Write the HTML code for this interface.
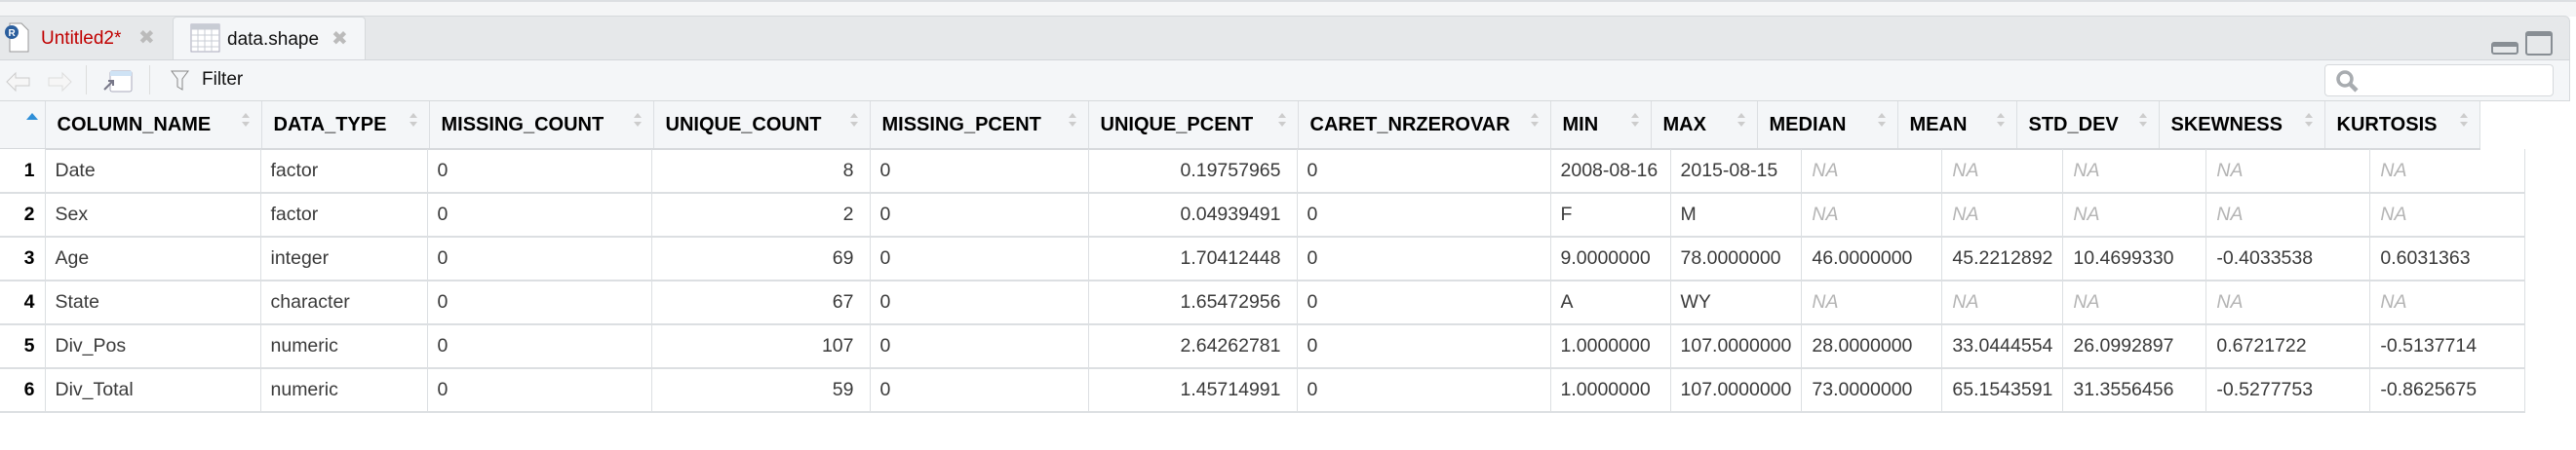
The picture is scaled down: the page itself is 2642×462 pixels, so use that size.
<!DOCTYPE html>
<html><head><meta charset="utf-8"><style>
*{box-sizing:border-box;margin:0;padding:0}
body{width:2642px;height:462px;background:#fff;font-family:"Liberation Sans",sans-serif;position:relative;overflow:hidden}
.top{position:absolute;left:0;top:0;width:2642px;height:17px;background:#f4f5f6;border-top:2px solid #dcdfe2}
.tabbar{position:absolute;left:0;top:16px;width:2636px;height:45px;background:#e6e8ea;border-top:1px solid #d6d9dc;border-right:1px solid #d6d9dc;border-radius:0 6px 0 0}
.tab{position:absolute;top:0;height:45px;font-size:19px;line-height:45px}
.tb{position:absolute;left:0;top:61px;width:2636px;height:43px;background:#f4f6f8;border-top:1px solid #d3d6da;border-bottom:1px solid #d6d9dc;border-right:1px solid #d6d9dc}
table{position:absolute;border-collapse:collapse;table-layout:fixed}
.h{left:0;top:104px}
.h td{height:49px;background:#f4f6f8;border-right:1px solid #dcdfe2;border-bottom:2px solid #d6d9dc;font-weight:bold;font-size:20px;color:#000;padding-left:12px;position:relative;white-space:nowrap}
.h td:first-child{border-right:1px solid #dcdfe2}
.ar{position:absolute;right:12px;top:12px;width:8px;height:14px}
.b{left:0;top:153px}
.b td{height:45px;border-right:1px solid #dcdfe2;border-bottom:2px solid #dcdfe2;font-size:19.5px;color:#3a3a3a;padding:0 10px;white-space:nowrap;overflow:hidden}
.b td.n{font-weight:bold;color:#000;text-align:right;padding-right:10px;background:#fff}
.b td.r{text-align:right;padding-right:16px}
.b td.na{color:#b4b4b4;font-style:italic}
</style></head><body>
<div class="top"></div>
<div class="tabbar">
 <div class="tab" style="left:0;width:176px;color:#c00000">
  <svg style="position:absolute;left:4px;top:6px" width="30" height="32"><path d="M6 1h12l7 7v22H6z" fill="#fff" stroke="#999"/><circle cx="8" cy="10" r="7" fill="#2c5f9e"/><text x="4.5" y="14" font-size="10" fill="#fff" font-weight="bold" font-family="Liberation Sans">R</text></svg>
  <span style="position:absolute;left:42px">Untitled2*</span>
  <span style="position:absolute;left:142px;color:#bbb;font-size:20px">✖</span>
 </div>
 <div class="tab" style="left:177px;width:198px;background:#f4f6f8;border:1px solid #d6d9dc;border-bottom:none;border-radius:4px 4px 0 0;color:#111">
  <svg style="position:absolute;left:17px;top:5px" width="32" height="32"><rect x="1" y="2" width="29" height="28" fill="#fff" stroke="#aab"/><path d="M1 7h29M1 13h29M1 19h29M1 25h29M8 7v23M15 7v23M22 7v23" stroke="#c8ccd4"/><rect x="1" y="2" width="29" height="5" fill="#c8ccd4"/></svg>
  <span style="position:absolute;left:55px">data.shape</span>
  <span style="position:absolute;left:162px;color:#bbb;font-size:20px">✖</span>
 </div>
 <svg style="position:absolute;left:2555px;top:15px" width="64" height="26"><rect x="1" y="12" width="26" height="11" rx="2" fill="none" stroke="#888e94" stroke-width="2"/><rect x="1" y="12" width="26" height="4" fill="#888e94"/><rect x="36" y="1" width="26" height="23" rx="2" fill="none" stroke="#888e94" stroke-width="2"/><rect x="36" y="1" width="26" height="4" fill="#888e94"/></svg>
</div>
<div class="tb">
 <svg style="position:absolute;left:5px;top:11px" width="70" height="22"><path d="M2 11l9-9v5h14v8H11v5z" fill="#f6f6f6" stroke="#ccc"/><path d="M68 11l-9-9v5H45v8h14v5z" fill="#f6f6f6" stroke="#ddd"/></svg>
 <div style="position:absolute;left:88px;top:5px;width:1px;height:30px;background:#ddd"></div>
 <svg style="position:absolute;left:105px;top:10px" width="32" height="24"><rect x="8" y="1" width="22" height="21" rx="2" fill="#fff" stroke="#aab"/><rect x="8" y="1" width="22" height="5" fill="#cfe3f5"/><path d="M2 20l9-9M6 11h5v5" stroke="#778" stroke-width="2" fill="none"/></svg>
 <div style="position:absolute;left:153px;top:5px;width:1px;height:30px;background:#ddd"></div>
 <svg style="position:absolute;left:175px;top:10px" width="20" height="22"><path d="M1 1h17l-6 8v11l-5-3V9z" fill="none" stroke="#888"/></svg>
 <span style="position:absolute;left:207px;top:9px;font-size:19px;color:#111">Filter</span>
 <div style="position:absolute;left:2384px;top:4px;width:235px;height:33px;background:#fff;border:1px solid #d6d9dc;border-radius:4px">
  <svg style="position:absolute;left:10px;top:4px" width="28" height="28"><circle cx="10" cy="10" r="7" fill="none" stroke="#a8acb0" stroke-width="3.5"/><path d="M15 15l7 7" stroke="#a8acb0" stroke-width="4.5"/></svg>
 </div>
</div>
<table class="h"><colgroup><col style="width:46px"><col style="width:222px"><col style="width:172px"><col style="width:230px"><col style="width:222px"><col style="width:224px"><col style="width:215px"><col style="width:259px"><col style="width:103px"><col style="width:109px"><col style="width:144px"><col style="width:122px"><col style="width:146px"><col style="width:170px"><col style="width:159px"></colgroup>
<tr><td style="padding:0"><svg style="position:absolute;left:27px;top:12px" width="12" height="8"><path d="M0 7L6 0L12 7z" fill="#2f8fd8"/></svg></td>
<td>COLUMN_NAME<svg class="ar"><path d="M0 5L4 0L8 5zM0 9L4 14L8 9z" fill="#ccc"/></svg></td>
<td>DATA_TYPE<svg class="ar"><path d="M0 5L4 0L8 5zM0 9L4 14L8 9z" fill="#ccc"/></svg></td>
<td>MISSING_COUNT<svg class="ar"><path d="M0 5L4 0L8 5zM0 9L4 14L8 9z" fill="#ccc"/></svg></td>
<td>UNIQUE_COUNT<svg class="ar"><path d="M0 5L4 0L8 5zM0 9L4 14L8 9z" fill="#ccc"/></svg></td>
<td>MISSING_PCENT<svg class="ar"><path d="M0 5L4 0L8 5zM0 9L4 14L8 9z" fill="#ccc"/></svg></td>
<td>UNIQUE_PCENT<svg class="ar"><path d="M0 5L4 0L8 5zM0 9L4 14L8 9z" fill="#ccc"/></svg></td>
<td>CARET_NRZEROVAR<svg class="ar"><path d="M0 5L4 0L8 5zM0 9L4 14L8 9z" fill="#ccc"/></svg></td>
<td>MIN<svg class="ar"><path d="M0 5L4 0L8 5zM0 9L4 14L8 9z" fill="#ccc"/></svg></td>
<td>MAX<svg class="ar"><path d="M0 5L4 0L8 5zM0 9L4 14L8 9z" fill="#ccc"/></svg></td>
<td>MEDIAN<svg class="ar"><path d="M0 5L4 0L8 5zM0 9L4 14L8 9z" fill="#ccc"/></svg></td>
<td>MEAN<svg class="ar"><path d="M0 5L4 0L8 5zM0 9L4 14L8 9z" fill="#ccc"/></svg></td>
<td>STD_DEV<svg class="ar"><path d="M0 5L4 0L8 5zM0 9L4 14L8 9z" fill="#ccc"/></svg></td>
<td>SKEWNESS<svg class="ar"><path d="M0 5L4 0L8 5zM0 9L4 14L8 9z" fill="#ccc"/></svg></td>
<td>KURTOSIS<svg class="ar"><path d="M0 5L4 0L8 5zM0 9L4 14L8 9z" fill="#ccc"/></svg></td></tr></table>
<table class="b"><colgroup><col style="width:46px"><col style="width:221px"><col style="width:171px"><col style="width:230px"><col style="width:224px"><col style="width:224px"><col style="width:214px"><col style="width:260px"><col style="width:123px"><col style="width:134px"><col style="width:144px"><col style="width:124px"><col style="width:147px"><col style="width:168px"><col style="width:159px"></colgroup>
<tr><td class="n">1</td><td>Date</td><td>factor</td><td>0</td><td class="r">8</td><td>0</td><td class="r">0.19757965</td><td>0</td><td>2008-08-16</td><td>2015-08-15</td><td class="na">NA</td><td class="na">NA</td><td class="na">NA</td><td class="na">NA</td><td class="na">NA</td></tr>
<tr><td class="n">2</td><td>Sex</td><td>factor</td><td>0</td><td class="r">2</td><td>0</td><td class="r">0.04939491</td><td>0</td><td>F</td><td>M</td><td class="na">NA</td><td class="na">NA</td><td class="na">NA</td><td class="na">NA</td><td class="na">NA</td></tr>
<tr><td class="n">3</td><td>Age</td><td>integer</td><td>0</td><td class="r">69</td><td>0</td><td class="r">1.70412448</td><td>0</td><td>9.0000000</td><td>78.0000000</td><td>46.0000000</td><td>45.2212892</td><td>10.4699330</td><td>-0.4033538</td><td>0.6031363</td></tr>
<tr><td class="n">4</td><td>State</td><td>character</td><td>0</td><td class="r">67</td><td>0</td><td class="r">1.65472956</td><td>0</td><td>A</td><td>WY</td><td class="na">NA</td><td class="na">NA</td><td class="na">NA</td><td class="na">NA</td><td class="na">NA</td></tr>
<tr><td class="n">5</td><td>Div_Pos</td><td>numeric</td><td>0</td><td class="r">107</td><td>0</td><td class="r">2.64262781</td><td>0</td><td>1.0000000</td><td>107.0000000</td><td>28.0000000</td><td>33.0444554</td><td>26.0992897</td><td>0.6721722</td><td>-0.5137714</td></tr>
<tr><td class="n">6</td><td>Div_Total</td><td>numeric</td><td>0</td><td class="r">59</td><td>0</td><td class="r">1.45714991</td><td>0</td><td>1.0000000</td><td>107.0000000</td><td>73.0000000</td><td>65.1543591</td><td>31.3556456</td><td>-0.5277753</td><td>-0.8625675</td></tr>
</table>
</body></html>
